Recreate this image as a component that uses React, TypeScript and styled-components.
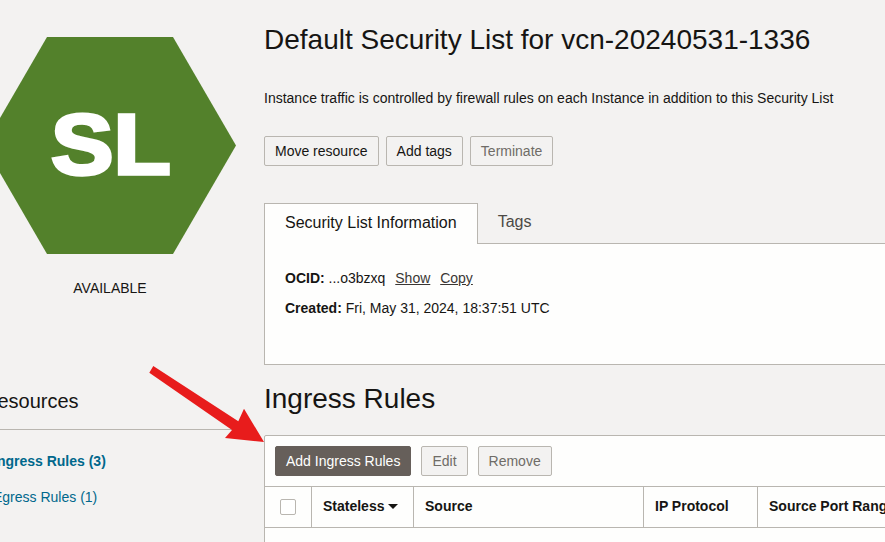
import styled, { createGlobalStyle } from 'styled-components'

const GlobalStyle = createGlobalStyle`
    html, body {
        margin: 0;
        height: 100%;
        overflow: hidden;
        background: #f3f2f1;
    }
    body {
        font-family: "Liberation Sans", Arial, sans-serif;
        font-size: 14px;
        color: #161513;
    }
`

const columns = [
    { label: 'Stateless', width: 102, sorted: true },
    { label: 'Source', width: 230 },
    { label: 'IP Protocol', width: 114 },
    { label: 'Source Port Range', width: 200 },
]

export default function App() {
    return (
        <Page>
            <GlobalStyle />
            <Sidebar>
                <Hexagon><HexagonLabel>SL</HexagonLabel></Hexagon>
                <Status>AVAILABLE</Status>
                <ResourcesTitle>Resources</ResourcesTitle>
                <ResourcesList>
                    <ResourceLink $active>Ingress Rules (3)</ResourceLink>
                    <ResourceLink>Egress Rules (1)</ResourceLink>
                </ResourcesList>
            </Sidebar>
            <Main>
                <Title>Default Security List for vcn-20240531-1336</Title>
                <Description>Instance traffic is controlled by firewall rules on each Instance in addition to this Security List</Description>
                <Actions>
                    <Button>Move resource</Button>
                    <Button>Add tags</Button>
                    <Button $disabled>Terminate</Button>
                </Actions>
                <Tabs>
                    <ActiveTab>Security List Information</ActiveTab>
                    <Tab>Tags</Tab>
                </Tabs>
                <InfoPanel>
                    <InfoRow>
                        <b>OCID:</b> ...o3bzxq <InfoLink>Show</InfoLink> <InfoLink>Copy</InfoLink>
                    </InfoRow>
                    <InfoRow>
                        <b>Created:</b> Fri, May 31, 2024, 18:37:51 UTC
                    </InfoRow>
                </InfoPanel>
                <SectionTitle>Ingress Rules</SectionTitle>
                <TableBox>
                    <Toolbar>
                        <PrimaryButton>Add Ingress Rules</PrimaryButton>
                        <Button $disabled>Edit</Button>
                        <Button $disabled>Remove</Button>
                    </Toolbar>
                    <HeaderRow>
                        <CheckCell><Checkbox /></CheckCell>
                        {columns.map(col => (
                            <HeaderCell key={col.label} $width={col.width}>
                                {col.label}
                                {col.sorted && <SortCaret />}
                            </HeaderCell>
                        ))}
                    </HeaderRow>
                </TableBox>
            </Main>
            <Arrow width="120" height="80" viewBox="0 0 120 80">
                <polygon points="5.3,1 90.3,56.3 96,43.7 116,77 77,73 84,65 1.3,7.7" fill="#e81c1c" />
            </Arrow>
        </Page>
    )
}

const Page = styled.div`
    position: relative;
    display: flex;
    width: 885px;
    height: 542px;
    overflow: hidden;
`

const Sidebar = styled.aside`
    flex: 0 0 252px;
    margin-left: -16px;
    margin-right: 28px;
    padding-top: 37px;
`

const Hexagon = styled.div`
    display: flex;
    align-items: center;
    justify-content: center;
    height: 217px;
    background: #53812b;
    clip-path: polygon(25% 0, 75% 0, 100% 50%, 75% 100%, 25% 100%, 0 50%);
`

const HexagonLabel = styled.span`
    color: #fff;
    font-size: 86px;
    font-weight: 700;
    line-height: 1;
    transform: translate(1px, -2px) scaleX(1.09);
    -webkit-text-stroke: 3.5px #fff;
`

const Status = styled.div`
    margin-top: 26px;
    text-align: center;
    line-height: 16px;
`

const ResourcesTitle = styled.h2`
    margin: 93px 0 0;
    padding: 0 0 16px;
    border-bottom: 1px solid #b9b6b0;
    font-size: 20px;
    font-weight: 400;
    line-height: 24px;
    text-indent: -1px;
`

const ResourcesList = styled.div`
    display: flex;
    flex-direction: column;
    gap: 20px;
    margin-top: 23px;
    padding-left: 9px;
`

const ResourceLink = styled.a<{ $active?: boolean }>`
    color: #00688c;
    font-weight: ${p => (p.$active ? 700 : 400)};
    line-height: 16px;
`

const Main = styled.main`
    flex: 0 0 auto;
    width: 700px;
    padding-top: 24px;
`

const Title = styled.h1`
    margin: 0;
    font-size: 28px;
    font-weight: 400;
    line-height: 31px;
    white-space: nowrap;
`

const Description = styled.p`
    margin: 35px 0 0;
    line-height: 16px;
    white-space: nowrap;
`

const Actions = styled.div`
    display: flex;
    gap: 7px;
    margin-top: 30px;
`

const Button = styled.button<{ $disabled?: boolean }>`
    height: 30px;
    padding: 0 10px;
    background: #f3f2f1;
    border: 1px solid #b9b6b0;
    border-radius: 2px;
    color: ${p => (p.$disabled ? '#6f6c67' : '#161513')};
    font: inherit;
    font-size: 14px;
`

const PrimaryButton = styled(Button)`
    background: #665f5a;
    border-color: #665f5a;
    color: #fff;
`

const Tabs = styled.div`
    display: flex;
    margin-top: 37px;
    height: 40px;
    border-bottom: 1px solid #b9b6b0;
`

const Tab = styled.div`
    padding: 0 20px;
    color: #4c4945;
    font-size: 16px;
    line-height: 38px;
`

const ActiveTab = styled(Tab)`
    height: 40px;
    background: #fefefd;
    border: 1px solid #b9b6b0;
    border-bottom: none;
    color: #161513;
    line-height: 38px;
`

const InfoPanel = styled.section`
    height: 121px;
    box-sizing: border-box;
    padding-top: 26px;
    background: #fefefd;
    border: 1px solid #b9b6b0;
    border-top: none;
    padding-left: 20px;
`

const InfoRow = styled.div`
    margin-bottom: 14px;
    line-height: 16px;
`

const InfoLink = styled.a`
    margin-left: 6px;
    color: #3a3734;
    text-decoration: underline;
`

const SectionTitle = styled.h2`
    margin: 17px 0 0;
    font-size: 28px;
    font-weight: 400;
    line-height: 33px;
`

const TableBox = styled.section`
    margin-top: 20px;
    min-height: 120px;
    background: #fefefd;
    border: 1px solid #b9b6b0;
    border-radius: 2px 0 0 0;
`

const Toolbar = styled.div`
    display: flex;
    gap: 10px;
    align-items: center;
    height: 51px;
    padding-left: 10px;
    box-sizing: border-box;
    border-bottom: 1px solid #b9b6b0;
`

const HeaderRow = styled.div`
    display: flex;
    height: 41px;
    box-sizing: border-box;
    border-bottom: 1px solid #b9b6b0;
`

const CheckCell = styled.div`
    display: flex;
    flex: 0 0 46px;
    align-items: center;
    justify-content: center;
    border-right: 1px solid #b9b6b0;
`

const Checkbox = styled.span`
    width: 14px;
    height: 14px;
    background: #fff;
    border: 1px solid #b9b6b0;
    border-radius: 2px;
`

const HeaderCell = styled.div<{ $width: number }>`
    display: flex;
    flex: 0 0 ${p => p.$width}px;
    box-sizing: border-box;
    align-items: center;
    padding: 0 0 2px 11px;
    border-right: 1px solid #b9b6b0;
    font-weight: 700;
    white-space: nowrap;
`

const SortCaret = styled.span`
    margin-left: 4px;
    border-top: 5px solid #161513;
    border-left: 5px solid transparent;
    border-right: 5px solid transparent;
`

const Arrow = styled.svg`
    position: absolute;
    left: 148px;
    top: 365px;
`
